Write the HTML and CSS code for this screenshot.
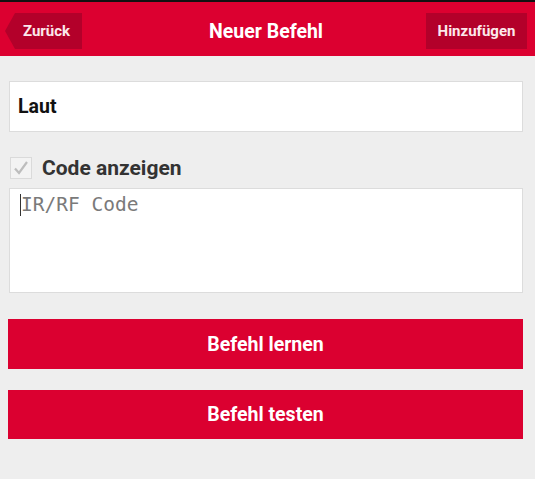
FILE: index.html
```html
<!DOCTYPE html>
<html lang="de">
<head>
  <meta charset="UTF-8">
  <title>Neuer Befehl</title>
  <link rel="stylesheet" href="styles.css">
</head>
<body>
  <!-- Top bar with back and add buttons -->
  <div id="header">
    <div class="header-left">
      <a class="backButton" href="#">Zurück</a>
    </div>
    <h1>Neuer Befehl</h1>
    <div class="header-right">
      <a class="addButton" href="#">Hinzufügen</a>
    </div>
  </div>

  <div class="content">
    <div class="field name-field">Laut</div>

    <label class="check-row">
      <span class="checkbox">
        <svg width="18" height="18" viewBox="0 0 18 18">
          <path d="M3 9.5 L7 14 L15 3" fill="none" stroke="#bdbdbd" stroke-width="2.2"/>
        </svg>
      </span>
      <span class="check-label">Code anzeigen</span>
    </label>

    <div class="field code-field"><span class="caret"></span><span class="placeholder">IR/RF Code</span></div>

    <button class="action first">Befehl lernen</button>
    <button class="action">Befehl testen</button>
  </div>
</body>
</html>
```

FILE: styles.css
```css
body {
  margin: 0;
  background: #eeeeee;
  font-family: Roboto, "Liberation Sans", Arial, sans-serif;
  border-top: 2px solid #111;
}
/* Header */
#header {
  display: grid;
  grid-template-columns: 1fr auto 1fr;
  align-items: center;
  height: 54px;
  box-sizing: border-box;
  background: #dc0030;
  padding: 4px 8px 0 5px;
}
h1 {
  margin: 0;
  font-size: 19.5px;
  font-weight: bold;
  color: #fff;
}
.header-right {
  display: flex;
  justify-content: flex-end;
}
.backButton,
.addButton {
  display: flex;
  align-items: center;
  justify-content: center;
  height: 36px;
  background: #b3002a;
  color: #fce8ec;
  font-size: 15px;
  font-weight: bold;
  text-decoration: none;
}
.backButton {
  width: 77px;
  padding-left: 6px;
  box-sizing: border-box;
  clip-path: polygon(0 50%, 10px 0, 100% 0, 100% 100%, 10px 100%);
}
.addButton {
  width: 101px;
}
/* Form */
.content {
  padding: 0 12px 0 8px;
}
.field {
  background: #fff;
  border: 1px solid #dcdcdc;
  box-sizing: border-box;
  margin-left: 1px;
}
.name-field {
  margin-top: 25px;
  height: 51px;
  padding-left: 8px;
  display: flex;
  align-items: center;
  font-size: 19.5px;
  font-weight: bold;
  color: #111;
}
.check-row {
  display: flex;
  align-items: center;
  margin-top: 25px;
  margin-left: 2px;
  height: 22px;
}
.checkbox {
  width: 22px;
  height: 22px;
  box-sizing: border-box;
  border: 1px solid #dadada;
  background: #f3f3f3;
  display: flex;
  align-items: center;
  justify-content: center;
}
.check-label {
  margin-left: 10px;
  font-size: 21px;
  font-weight: bold;
  color: #333;
}
.code-field {
  margin-top: 9px;
  height: 105px;
  padding: 4px 10px;
  display: flex;
  align-items: flex-start;
}
.caret {
  width: 1px;
  height: 22px;
  background: #333;
  margin-top: 1px;
}
.placeholder {
  font-family: "DejaVu Sans Mono", monospace;
  font-size: 19.5px;
  color: #7a7a7a;
  line-height: 24px;
}
.action {
  display: block;
  width: 100%;
  height: 49px;
  margin-top: 21px;
  border: none;
  background: #db0030;
  color: #fff;
  font-family: Roboto, "Liberation Sans", Arial, sans-serif;
  font-size: 19.5px;
  font-weight: bold;
}
.action.first {
  margin-top: 26px;
  height: 50px;
}
```
